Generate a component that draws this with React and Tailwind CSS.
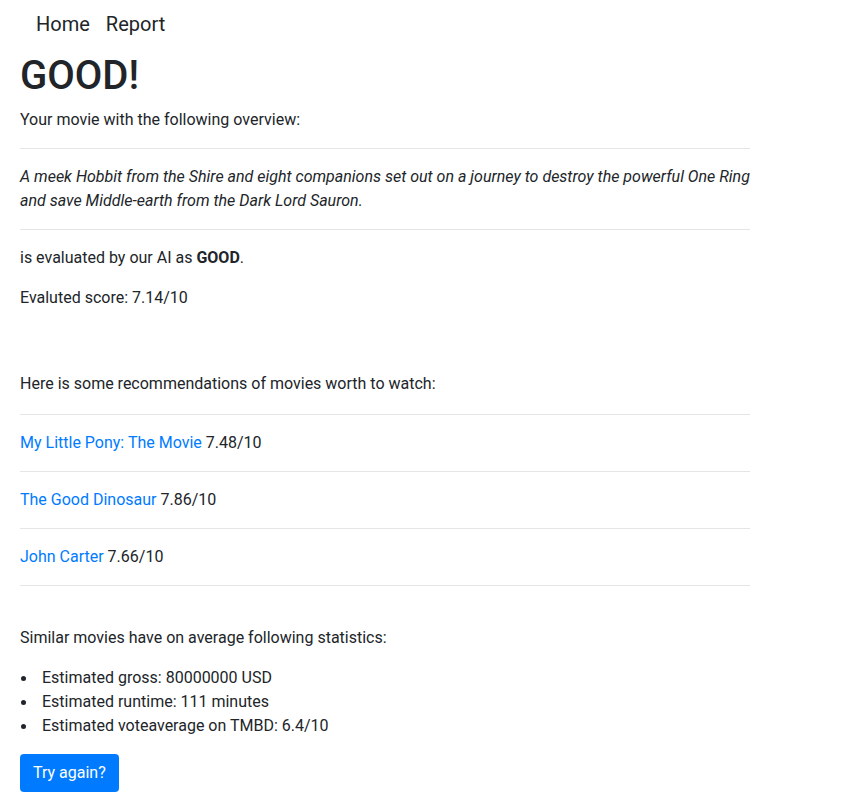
import React from 'react';

const recommendations = [
  { title: 'My Little Pony: The Movie', score: '7.48/10' },
  { title: 'The Good Dinosaur', score: '7.86/10' },
  { title: 'John Carter', score: '7.66/10' },
];

const stats = [
  'Estimated gross: 80000000 USD',
  'Estimated runtime: 111 minutes',
  'Estimated voteaverage on TMBD: 6.4/10',
];

const App = () => {
  return (
    <div className="min-h-[800px] bg-white text-[16px] leading-6 text-[#212529] font-['Roboto','Liberation_Sans',sans-serif]">
      <nav className="flex items-center pl-[28px] pt-[9px] pb-[8px] text-[20px] leading-[30px]">
        <a href="#" className="px-2 text-[#212529]">Home</a>
        <a href="#" className="px-2 text-[#212529]">Report</a>
      </nav>

      <div className="ml-5 w-[730px]">
        <h1 className="mt-[5px] mb-2 text-[40px] leading-[48px] font-medium">GOOD!</h1>
        <p className="mb-4">Your movie with the following overview:</p>
        <hr className="my-4 border-t border-black/10" />
        <p className="mb-4 italic">
          A meek Hobbit from the Shire and eight companions set out on a journey to destroy the powerful One Ring and save Middle-earth from the Dark Lord Sauron.
        </p>
        <hr className="my-4 border-t border-black/10" />
        <p className="mb-4">
          is evaluated by our AI as <b className="font-bold">GOOD</b>.
        </p>
        <p className="mb-4">Evaluted score: 7.14/10</p>

        <p className="mt-[62px] mb-[18px]">Here is some recommendations of movies worth to watch:</p>
        {recommendations.map((movie) => (
          <div key={movie.title}>
            <hr className="my-4 border-t border-black/10" />
            <p className="mb-4">
              <a href="#" className="text-[#007bff]">{movie.title}</a> {movie.score}
            </p>
          </div>
        ))}
        <hr className="my-4 border-t border-black/10" />

        <p className="mt-[40px] mb-4">Similar movies have on average following statistics:</p>
        <ul className="mb-4">
          {stats.map((s) => (
            <li key={s} className="flex items-center">
              <span className="ml-[1px] mr-4 h-[5px] w-[5px] shrink-0 rounded-full bg-[#212529]" />
              <span>{s}</span>
            </li>
          ))}
        </ul>
        <button className="rounded bg-[#007bff] px-[13px] py-[7px] text-white leading-6">Try again?</button>
      </div>
    </div>
  );
};

export default App;
